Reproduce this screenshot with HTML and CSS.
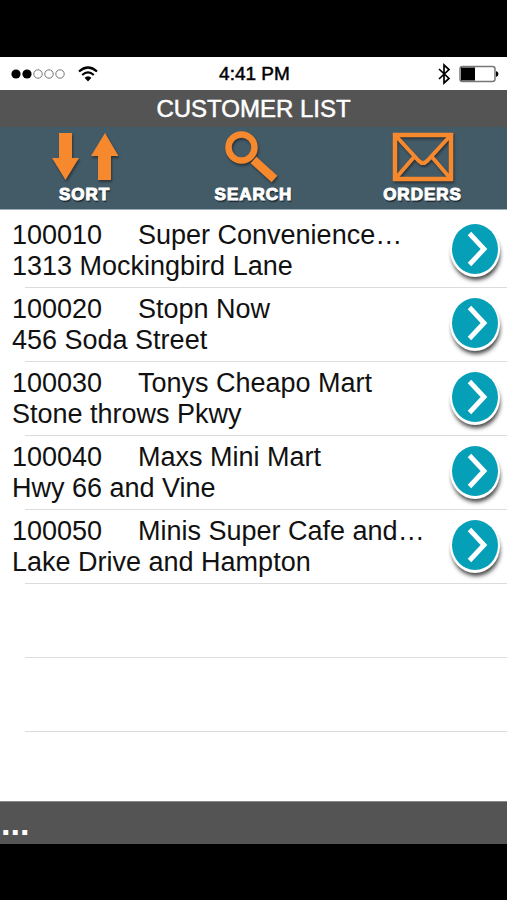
FILE: index.html
```html
<!DOCTYPE html>
<html lang="en">
<head>
<meta charset="utf-8">
<meta name="viewport" content="width=device-width, initial-scale=1">
<title>Customer List</title>
<link rel="stylesheet" href="styles.css">
</head>
<body>
<svg class="defs" aria-hidden="true">
  <symbol id="go" viewBox="0 0 56 60" overflow="visible">
    <ellipse class="go-shadow" cx="28" cy="34" rx="24" ry="25"/>
    <ellipse cx="27" cy="29" rx="25" ry="27" fill="#fff"/>
    <ellipse cx="27" cy="28" rx="23" ry="25" fill="#05a0b8"/>
    <path d="M21.500 12.500 36 28 21.500 43.500" fill="none" stroke="#fff" stroke-width="4.800"/>
  </symbol>
</svg>
<div class="screen">
  <div class="status">
    <div class="status-left">
      <svg width="56" height="12" viewBox="0 0 56 12" aria-hidden="true">
        <circle cx="6" cy="6" r="4.6"/><circle cx="17" cy="6" r="4.6"/>
        <g fill="none" stroke="#777"><circle cx="28" cy="6" r="4.2"/><circle cx="39" cy="6" r="4.2"/><circle cx="50" cy="6" r="4.2"/></g>
      </svg>
      <svg width="20" height="16" viewBox="0 0 20 16" aria-hidden="true">
        <g fill="none" stroke="#000" stroke-width="2.2"><path d="M1 5.5Q10-2.5 19 5.5"/><path d="M4.2 9Q10 3.800 15.800 9"/></g>
        <path d="M6.500 11.800Q10 8.800 13.500 11.800L10 15.500Z"/>
      </svg>
    </div>
    <span class="time">4:41 PM</span>
    <div class="status-right">
      <svg width="14" height="22" viewBox="0 0 14 22" aria-hidden="true"><path d="M2 6 12 15.500 7 20V2L12 6.500 2 16" fill="none" stroke="#000" stroke-width="1.700"/></svg>
      <svg width="40" height="18" viewBox="0 0 40 18" aria-hidden="true"><rect x="1" y="1.500" width="35" height="15" rx="2.500" fill="#fff" stroke="#777" stroke-width="1.500"/><path d="M2 2.500H16V15.500H2Z"/><path d="M37 6Q39.500 7 39.500 9T37 12Z"/></svg>
    </div>
  </div>
  <h1 class="title">CUSTOMER LIST</h1>
  <nav class="toolbar">
    <button class="tool" type="button">
      <svg class="tool-icon" width="68" height="52" viewBox="0 0 68 52" aria-hidden="true"><path fill="#f6882e" d="M8 1H21V26H28L14.500 48 1 26H8ZM54 1 67.500 24H60V48H47V24H40Z"/></svg>
      <span>SORT</span>
    </button>
    <button class="tool" type="button">
      <svg class="tool-icon" width="60" height="52" viewBox="0 0 60 52" aria-hidden="true"><g fill="none" stroke="#f6882e"><circle cx="17.500" cy="15.500" r="13" stroke-width="6.500"/><path d="M29.500 28 50.500 47" stroke-width="8.500"/></g></svg>
      <span>SEARCH</span>
    </button>
    <button class="tool" type="button">
      <svg class="tool-icon" width="62" height="52" viewBox="0 0 62 52" aria-hidden="true"><g fill="none" stroke="#f6882e" stroke-width="4.500"><rect x="3" y="3" width="56" height="44"/><path d="M4 4 27 29Q31 33 35 29L58 4M4 46 22 25M58 46 40 25" stroke-width="4"/></g></svg>
      <span>ORDERS</span>
    </button>
  </nav>
  <main class="list-area">
    <ul class="list">
      <li class="row"><div class="customer"><span class="number">100010</span><span>Super Convenience…</span><span class="address">1313 Mockingbird Lane</span></div><button class="go" type="button" aria-label="Open 100010"><svg aria-hidden="true"><use href="#go"/></svg></button></li>
      <li class="row"><div class="customer"><span class="number">100020</span><span>Stopn Now</span><span class="address">456 Soda Street</span></div><button class="go" type="button" aria-label="Open 100020"><svg aria-hidden="true"><use href="#go"/></svg></button></li>
      <li class="row"><div class="customer"><span class="number">100030</span><span>Tonys Cheapo Mart</span><span class="address">Stone throws Pkwy</span></div><button class="go" type="button" aria-label="Open 100030"><svg aria-hidden="true"><use href="#go"/></svg></button></li>
      <li class="row"><div class="customer"><span class="number">100040</span><span>Maxs Mini Mart</span><span class="address">Hwy 66 and Vine</span></div><button class="go" type="button" aria-label="Open 100040"><svg aria-hidden="true"><use href="#go"/></svg></button></li>
      <li class="row"><div class="customer"><span class="number">100050</span><span>Minis Super Cafe and…</span><span class="address">Lake Drive and Hampton</span></div><button class="go" type="button" aria-label="Open 100050"><svg aria-hidden="true"><use href="#go"/></svg></button></li>
      <li class="row"></li>
      <li class="row"></li>
    </ul>
  </main>
  <footer class="footer">...</footer>
</div>
</body>
</html>
```
FILE: styles.css
```css
* { box-sizing: border-box; }

body {
  margin: 0;
  background: #000;
  color: #111;
  font-family: "Liberation Sans", Arial, sans-serif;
}

button {
  border: 0;
  padding: 0;
  background: none;
  font: inherit;
  color: inherit;
  cursor: pointer;
}

svg { display: block; }

.defs {
  position: absolute;
  width: 0;
  height: 0;
}

.screen {
  display: flex;
  flex-direction: column;
  min-height: 100vh;
  padding: 57px 0 56px;
}

.status {
  display: grid;
  grid-template-columns: 1fr auto 1fr;
  align-items: center;
  padding: 0 8px 0 10px;
  min-height: 33px;
  background: #fff;
  color: #000;
}

.status-left,
.status-right {
  display: flex;
  align-items: center;
  gap: 12px;
}

.status-right {
  justify-content: flex-end;
  gap: 8px;
}

.time {
  font-size: 19px;
  -webkit-text-stroke: 0.5px #000;
}

.title {
  margin: 0;
  background: #545454;
  color: #fff;
  font-size: 24px;
  font-weight: 400;
  line-height: 36px;
  padding-top: 1px;
  text-align: center;
  -webkit-text-stroke: 0.5px #fff;
}

.toolbar {
  display: grid;
  grid-template-columns: repeat(3, 1fr);
  background: #435a67;
  padding: 5px 0 3px;
  border-bottom: 1px solid #9fb0bd;
}

.tool {
  display: flex;
  flex-direction: column;
  align-items: center;
  color: #fff;
  font-size: 17px;
  font-weight: 700;
  line-height: 22px;
  letter-spacing: 1px;
  text-shadow: 1px 2px 1px #1c2830;
  -webkit-text-stroke: 1px #fff;
}

.tool-icon {
  overflow: visible;
  filter: drop-shadow(1px 2px 1px #2a353c);
}

.list-area {
  flex: 1;
  padding-top: 4px;
  background: #fff;
}

.list {
  list-style: none;
  margin: 0;
  padding: 0;
}

.row {
  display: flex;
  justify-content: space-between;
  align-items: center;
  min-height: 74px;
  padding: 0 3px 0 12px;
  background: linear-gradient(#dcdcdc, #dcdcdc) 25px 100% / 100% 1px no-repeat;
}

.customer {
  display: grid;
  grid-template-columns: 126px auto;
  padding-bottom: 1px;
  font-size: 27px;
  line-height: 31px;
}

.address { grid-column: 1 / -1; }

.go svg {
  width: 56px;
  height: 60px;
  overflow: visible;
}

.go-shadow {
  fill: #444;
  filter: blur(2px);
}

.footer {
  padding-left: 1px;
  border-top: 1px solid #888;
  background: #545454;
  color: #fff;
  font-size: 34px;
  font-weight: 700;
  line-height: 42px;
}
```
